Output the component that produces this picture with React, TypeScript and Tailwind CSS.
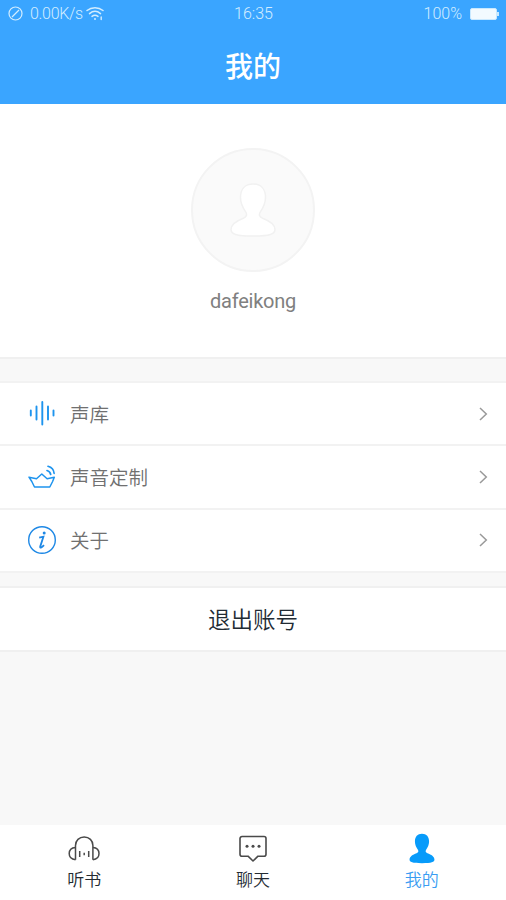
import type { ReactNode } from "react";

interface IconProps {
  className?: string;
}

function WifiIcon() {
  return (
    <svg width="18" height="15" viewBox="0 0 18 15" fill="none" stroke="currentColor" strokeWidth="1.5" strokeLinecap="round">
      <path d="M1 4.500C5.500.7 12.500.7 17 4.500" />
      <path d="M3.500 7.600c3.300-2.700 7.700-2.700 11 0" />
      <path d="M6 10.400c1.800-1.400 4.200-1.400 6 0" />
      <circle cx="9" cy="13" r="1" fill="currentColor" stroke="none" />
      <path d="M15.200 11v2.500" strokeWidth="1.400" />
    </svg>
  );
}

function PersonShape({ className }: IconProps) {
  return (
    <svg className={className} viewBox="0 0 46 54" strokeWidth="1.500">
      <path d="M23 1C15 1 10.500 6.200 10.500 14.500c0 6 2.300 10.200 5 14.200 1.900 2.900 1.300 5.200-2.100 6.500C6.500 37.800 1 41 1 46.500 1 51 6 53 23 53s22-2 22-6.500c0-5.500-5.500-8.700-12.400-11.300-3.400-1.300-4-3.600-2.100-6.500 2.700-4 5-8.200 5-14.200C35.500 6.200 31 1 23 1Z" />
    </svg>
  );
}

function VoiceIcon() {
  return (
    <svg width="28" height="28" viewBox="0 0 28 28" stroke="#1e94ee" strokeWidth="1.900" strokeLinecap="round">
      <path d="M2.800 10.500v5M8.500 6.500v13M14.300 2v22.500M20 6.500v13M25.500 10.500v5" />
    </svg>
  );
}

function BoatIcon() {
  return (
    <svg width="28" height="28" viewBox="0 0 28 28" fill="none" stroke="#1e94ee" strokeWidth="1.500" strokeLinejoin="round" strokeLinecap="round">
      <path d="M1 14.200l7.500 1.600 5.300-4.800 5.300 4.800 7.200-1.600-1.700 4.300-2.800 5.500H6.500l-2.700-5.500Z" />
      <path d="M19 7.500c2.200.6 3.400 2 3.700 4M20 3.300c3.800 1 5.800 3.400 6.100 7" strokeWidth="1.700" />
    </svg>
  );
}

function InfoIcon() {
  return (
    <svg width="28" height="28" viewBox="0 0 28 28" fill="none" stroke="#1e88e5" strokeWidth="1.400">
      <circle cx="14" cy="14" r="13.300" />
      <circle cx="16.200" cy="6.900" r="1.500" fill="#1e88e5" stroke="none" />
      <path d="M11.200 11.700l4.200-1-3.200 9.900c-.4 1.500 1.200 1.500 3.800-1.500" strokeWidth="1.800" />
    </svg>
  );
}

function ChevronIcon() {
  return (
    <svg width="9" height="14" viewBox="0 0 9 14" fill="none" stroke="#999" strokeWidth="1.500">
      <path d="M1 1l6.300 6L1 13" />
    </svg>
  );
}

function HeadphonesIcon() {
  return (
    <svg width="32" height="28" viewBox="0 0 32 28" fill="none" stroke="#4a4a4a" strokeWidth="1.500" strokeLinejoin="round">
      <path d="M7.500 24.700V10.500C7.500 5.500 11.200 2 16.200 2s8.700 3.500 8.700 8.500v14.200" />
      <path d="M7.500 12.500C3.500 12.800 1.200 15.300 1.200 18.600s2.300 5.800 6.300 6.100M24.900 12.500c3.900.3 6.100 2.800 6.100 6.100s-2.200 5.800-6.100 6.100" />
      <path d="M11.700 16v6M16.200 17.700v2.600M20.700 16v6" />
    </svg>
  );
}

function ChatIcon() {
  return (
    <svg width="30" height="28" viewBox="0 0 30 28" fill="none" stroke="#4a4a4a" strokeWidth="1.600" strokeLinejoin="round">
      <path d="M4 1.500h22a2 2 0 0 1 2 2v15.700a2 2 0 0 1-2 2h-6L15 26l-5-4.800H4a2 2 0 0 1-2-2V3.500a2 2 0 0 1 2-2Z" />
      <g fill="#4a4a4a" stroke="none">
        <circle cx="9" cy="11.200" r="1.500" />
        <circle cx="15" cy="11.200" r="1.500" />
        <circle cx="21" cy="11.200" r="1.500" />
      </g>
    </svg>
  );
}

interface MenuRowProps {
  icon: ReactNode;
  label: string;
}

function MenuRow({ icon, label }: MenuRowProps) {
  return (
    <button className="flex h-[63.300px] w-full items-center border-b-2 border-[#f2f2f2] pr-[18px] pl-7">
      {icon}
      <span className="ml-3.5 flex-1 text-left text-[19.500px] leading-7 font-[350] text-[#707070]">{label}</span>
      <ChevronIcon />
    </button>
  );
}

interface TabProps {
  icon: ReactNode;
  label: string;
  active?: boolean;
}

function Tab({ icon, label, active }: TabProps) {
  return (
    <button className={`flex flex-1 flex-col items-center pt-2 font-[350] ${active ? "text-[#3a9df2]" : "text-[#242b32]"}`}>
      <span className="flex h-[31px] items-center">{icon}</span>
      <span className="mt-0.5 text-[17px] leading-[26px]">{label}</span>
    </button>
  );
}

export default function App() {
  return (
    <div className="flex h-[900px] w-full flex-col bg-[#f8f8f8] font-['Noto_Sans_CJK_SC',sans-serif]">
      <header className="h-[104px] bg-[#3aa5ff] text-white">
        {/* Status bar */}
        <div className="grid h-[27px] grid-cols-3 items-center pr-[7px] pl-2 font-[Roboto,sans-serif] text-[16px] font-light text-[#d3edff]">
          <div className="flex items-center">
            <svg width="15" height="15" viewBox="0 0 15 15" fill="none" stroke="currentColor" strokeWidth="1.200">
              <circle cx="7.500" cy="7.500" r="6.500" />
              <path d="M4 11l7-7" />
            </svg>
            <span className="ml-[7px] tracking-[-0.3px]">0.00K/s</span>
            <span className="ml-[3px]"><WifiIcon /></span>
          </div>
          <span className="text-center">16:35</span>
          <div className="flex items-center justify-end">
            <span>100%</span>
            <span className="ml-2 h-3 w-[27px] rounded-[2px] border border-[#c9e9ff] bg-[#f2faff]" />
            <span className="h-1 w-[2px] bg-[#c9e9ff]" />
          </div>
        </div>
        <h1 className="mt-[18px] text-center text-[28px] leading-10 font-medium">我的</h1>
      </header>

      <section className="flex h-[255px] flex-col items-center border-b-2 border-[#f0f0f0] bg-white pt-11">
        <div className="flex h-[124px] w-[124px] items-center justify-center rounded-full border-2 border-[#f3f3f3] bg-[#fafafa]">
          <PersonShape className="h-[54px] w-[46px] fill-white stroke-[#f1f1f1]" />
        </div>
        <p className="mt-[15px] font-[Roboto,sans-serif] text-[20px] leading-7 tracking-[-0.25px] text-[#808080]">dafeikong</p>
      </section>

      <section className="mt-[22px] border-t-2 border-[#f2f2f2] bg-white">
        <MenuRow icon={<VoiceIcon />} label="声库" />
        <MenuRow icon={<BoatIcon />} label="声音定制" />
        <MenuRow icon={<InfoIcon />} label="关于" />
      </section>

      <button className="mt-[13px] h-[66px] border-y-2 border-[#f0f0f0] bg-white text-[22.500px] font-[350] text-[#222b34]">
        退出账号
      </button>

      <nav className="mt-auto flex h-[75px] bg-white">
        <Tab icon={<HeadphonesIcon />} label="听书" />
        <Tab icon={<ChatIcon />} label="聊天" />
        <Tab icon={<PersonShape className="h-[31px] w-[26px] fill-[#079bfa]" />} label="我的" active />
      </nav>
    </div>
  );
}
